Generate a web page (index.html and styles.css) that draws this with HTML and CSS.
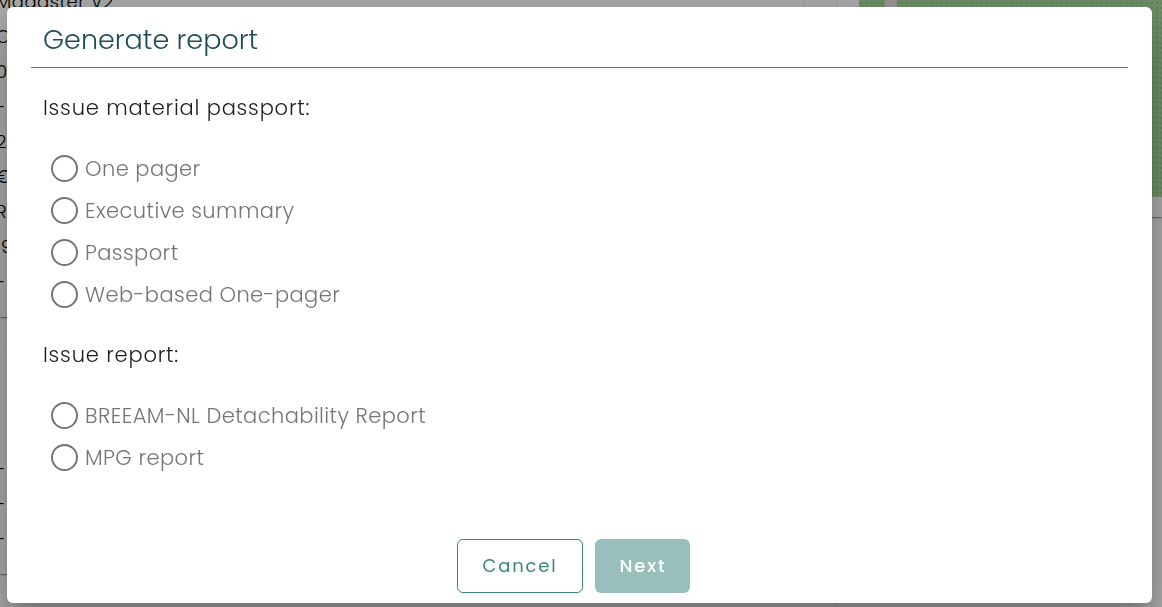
FILE: index.html
```html
<!DOCTYPE html>
<html lang="en">
<head>
<meta charset="utf-8">
<meta name="viewport" content="width=device-width, initial-scale=1">
<title>Generate report</title>
<link rel="stylesheet" href="styles.css">
</head>
<body>
<main class="page">
  <div class="column">
    <section class="card details">
      <p>Madaster V2</p>
      <p>O</p>
      <p>0</p>
      <p>-</p>
      <p>21</p>
      <p>€</p>
      <p>R</p>
      <p class="inset">9</p>
      <p>-</p>
    </section>
    <section class="card totals">
      <p>-</p>
      <p>-</p>
      <p>-</p>
    </section>
  </div>
  <div class="column">
    <section class="card map-card"><div class="map"></div></section>
    <section class="card rest"></section>
  </div>
</main>
<div class="backdrop">
  <form class="dialog" role="dialog" aria-modal="true" aria-labelledby="dialog-title">
    <h1 class="title" id="dialog-title">Generate report</h1>
    <fieldset class="group">
      <legend>Issue material passport:</legend>
      <label class="option"><input type="radio" name="report"><span>One pager</span></label>
      <label class="option"><input type="radio" name="report"><span>Executive summary</span></label>
      <label class="option"><input type="radio" name="report"><span>Passport</span></label>
      <label class="option"><input type="radio" name="report"><span>Web-based One-pager</span></label>
    </fieldset>
    <fieldset class="group">
      <legend>Issue report:</legend>
      <label class="option"><input type="radio" name="report"><span>BREEAM-NL Detachability Report</span></label>
      <label class="option"><input type="radio" name="report"><span>MPG report</span></label>
    </fieldset>
    <div class="actions">
      <button class="button" type="button">Cancel</button>
      <button class="button primary" type="submit" disabled>Next</button>
    </div>
  </form>
</div>
</body>
</html>
```

FILE: styles.css
```css
* {
  box-sizing: border-box;
}

body {
  margin: 0;
  overflow: hidden;
  background: #f8f8f8;
  color: #1c1c1c;
  font-family: Poppins, Inter, "Open Sans", sans-serif;
  font-weight: 300;
  letter-spacing: 0.05em;
}

.page {
  display: grid;
  grid-template-columns: 803fr 324fr;
  column-gap: 35px;
  height: 100vh;
  overflow: hidden;
}

.column {
  display: flex;
  flex-direction: column;
  gap: 35px;
  min-width: 0;
}

.card {
  background: #fafafa;
  box-shadow: 0 2px 1px -1px rgba(0, 0, 0, 0.2), 0 1px 1px rgba(0, 0, 0, 0.14), 0 1px 3px rgba(0, 0, 0, 0.12);
}

.card p {
  margin: 0 0 0 -4px;
  color: #000;
  font-size: 18px;
  line-height: 35px;
  letter-spacing: 0.03em;
}

.details {
  margin-top: -16px;
  padding-bottom: 18px;
}

.card .inset {
  padding-left: 5px;
}

.totals {
  padding: 99px 0 18px;
}

.map-card {
  padding: 0 0 20px 21px;
}

.map {
  height: 197px;
  background:
    linear-gradient(90deg, transparent 26px, #e6dcd8 26px, #e6dcd8 38px, transparent 38px),
    radial-gradient(circle, #8fb985 1px, transparent 1px) 0 0 / 5px 5px,
    #a3d398;
}

.rest {
  flex: 1;
}

.backdrop {
  position: fixed;
  inset: 0;
  display: flex;
  padding: 7px 10px 4px 7px;
  background: rgba(0, 0, 0, 0.32);
}

.dialog {
  flex: 1;
  display: flex;
  flex-direction: column;
  padding: 0 24px 10px;
  border-radius: 6px;
  background: #fff;
  box-shadow: 0 11px 15px -7px rgba(0, 0, 0, 0.2), 0 24px 38px 3px rgba(0, 0, 0, 0.14), 0 9px 46px 8px rgba(0, 0, 0, 0.12);
}

.title {
  margin: 0 0 22px;
  padding: 13px 12px 7px;
  border-bottom: 1px solid #3b857f;
  color: #1e4c59;
  font-size: 27px;
  font-weight: 300;
  line-height: 40px;
  letter-spacing: normal;
}

.group {
  margin: 0 0 22px;
  padding: 0 12px;
  border: 0;
}

.group legend {
  margin-bottom: 21px;
  padding: 0;
  font-size: 21px;
  line-height: 36px;
}

.option {
  display: flex;
  align-items: center;
  gap: 7px;
  height: 42px;
  padding-left: 8px;
  color: #757575;
  font-size: 21px;
  letter-spacing: 0.02em;
}

.option input {
  appearance: none;
  width: 27px;
  height: 27px;
  margin: 0;
  border: 2px solid #757575;
  border-radius: 50%;
}

.option input:checked {
  border: 8px solid #3b857f;
}

.actions {
  display: flex;
  justify-content: center;
  gap: 12px;
  margin-top: auto;
  padding-right: 12px;
}

.button {
  height: 54px;
  padding: 0 25px 2px;
  border: 1px solid #3b857f;
  border-radius: 6px;
  background: #fff;
  color: #3b857f;
  font: inherit;
  font-size: 18px;
  font-weight: 400;
  letter-spacing: 0.1em;
}

.primary {
  padding: 0 24px 2px;
  border: 0;
  background: #98bfbc;
  color: #fff;
  font-weight: 500;
}
```
